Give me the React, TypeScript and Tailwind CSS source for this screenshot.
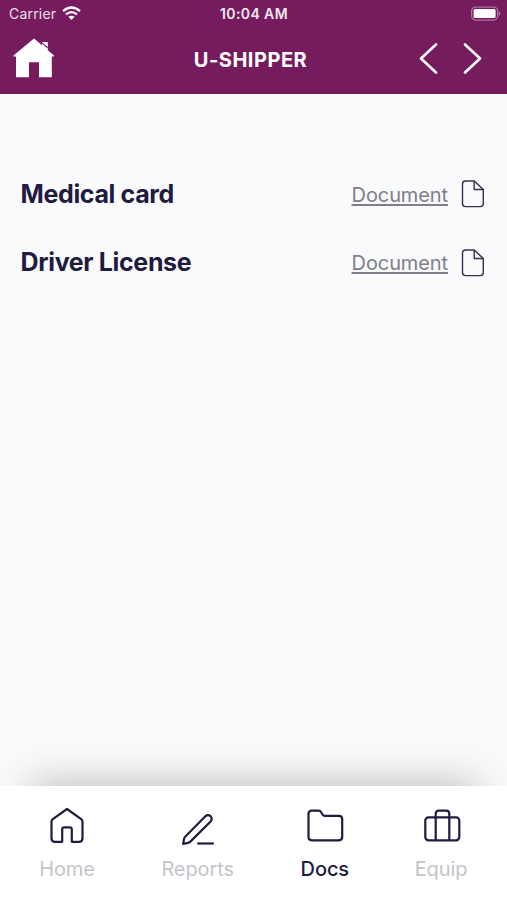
import React, { useState } from 'react';

interface DocumentRow {
  id: string;
  title: string;
}

interface Tab {
  id: string;
  label: string;
  labelClass: string;
  icon: React.ReactNode;
}

const documents: DocumentRow[] = [
  { id: 'medical', title: 'Medical card' },
  { id: 'license', title: 'Driver License' },
];

const tabs: Tab[] = [
  {
    id: 'home',
    label: 'Home',
    labelClass: 'w-[54px]',
    icon: (
      <path d="M20 2 L34.2 12.2 Q35.5 13.2 35.5 14.8 V31.2 Q35.5 34.8 32 34.8 H24.8 V22.5 Q24.8 20.3 22.6 20.3 H17.4 Q15.2 20.3 15.2 22.5 V34.8 H8 Q4.5 34.8 4.5 31.2 V14.8 Q4.5 13.2 5.8 12.2 Z" />
    ),
  },
  {
    id: 'reports',
    label: 'Reports',
    labelClass: 'w-[74px]',
    icon: (
      <>
        <path d="M5.2 36.8 L6 32 Q6.3 30.6 7.4 29.5 L27.4 9.3 A3.65 3.65 0 0 1 32.6 14.5 L12.6 34.4 Q11.4 35.6 10 35.9 Z" />
        <path d="M19.3 36.5 H35.8" />
      </>
    ),
  },
  {
    id: 'docs',
    label: 'Docs',
    labelClass: 'w-[47px]',
    icon: (
      <path d="M6.8 3.7 H13.8 Q15.2 3.7 16 5 L17.6 7.6 Q18.4 8.8 19.8 8.8 H33.9 Q37.2 8.8 37.2 12 V30.1 Q37.2 33.3 33.9 33.3 H6.8 Q3.5 33.3 3.5 30.1 V6.9 Q3.5 3.7 6.8 3.7 Z" />
    ),
  },
  {
    id: 'equip',
    label: 'Equip',
    labelClass: 'w-[52px]',
    icon: (
      <>
        <rect x="4.3" y="10.3" width="34" height="23" rx="3.2" />
        <path d="M14.7 33.3 V6.9 Q14.7 3.7 17.9 3.7 H25.1 Q28.3 3.7 28.3 6.9 V33.3" />
      </>
    ),
  },
];

function StatusBar() {
  return (
    <div className="flex h-7 items-center justify-between pl-[9px] pr-[8px]">
      <div className="flex w-[200px] items-center gap-[6px]">
        <span className="text-[14px] leading-7 tracking-[0.2px] text-white/85">Carrier</span>
        <svg width="19" height="15" viewBox="0 0 19 15" fill="none" stroke="white" strokeWidth="2.3" className="-mt-px">
          <path d="M1 5.1 Q9.5 -2 18 5.1" />
          <path d="M4 8.4 Q9.5 3.9 15 8.4" />
          <path d="M6.4 10.8 Q9.5 8.6 12.6 10.8 L9.5 14 Z" fill="white" stroke="none" />
        </svg>
      </div>
      <span className="whitespace-nowrap text-[14px] font-semibold leading-7 tracking-[0.4px] text-white/90">10:04 AM</span>
      <div className="flex w-[200px] justify-end">
        <svg width="31" height="15" viewBox="0 0 31 15" className="-mr-[2px] -mt-px">
          <rect x="1.6" y="1.1" width="26" height="13" rx="4" fill="none" stroke="white" strokeOpacity="0.4" strokeWidth="1.2" />
          <rect x="3.6" y="3.1" width="22" height="9" rx="1.5" fill="white" />
          <path d="M28.8 5.2 Q31.6 7.5 28.8 9.8 Z" fill="white" fillOpacity="0.5" />
        </svg>
      </div>
    </div>
  );
}

function Header() {
  return (
    <header className="h-[94px] bg-[#761c5e]">
      <StatusBar />
      <div className="flex h-[62px] items-center justify-between pl-[13px] pr-[25px]">
        <button className="-mt-[2px] flex w-[69px]" aria-label="Home">
          <svg width="42" height="40" viewBox="0 0 42 40" fill="white">
            <path d="M21 0.5 L29 7.3 V4 H34.8 V12.2 L41 17.5 V18.5 H38.8 V39.2 H26 V24.2 H16 V39.2 H3 V18.5 H0.5 V17.5 Z" />
            <path d="M28.6 4.6 L34.6 9.8" stroke="#761c5e" strokeWidth="1.2" />
          </svg>
        </button>
        <h1 className="pt-px text-[20px] font-bold leading-6 tracking-[0.5px] text-white">U-SHIPPER</h1>
        <div className="flex w-[63px] justify-between">
          <button aria-label="Previous">
            <svg width="19" height="32" viewBox="0 0 19 32" fill="none" stroke="white" strokeWidth="2.6" strokeLinecap="round" strokeLinejoin="round">
              <path d="M17 1.5 L2 15.5 L17 29.5" />
            </svg>
          </button>
          <button aria-label="Next">
            <svg width="19" height="32" viewBox="0 0 19 32" fill="none" stroke="white" strokeWidth="2.6" strokeLinecap="round" strokeLinejoin="round">
              <path d="M2 1.5 L17 15.5 L2 29.5" />
            </svg>
          </button>
        </div>
      </div>
    </header>
  );
}

function DocumentItem({ title }: { title: string }) {
  return (
    <li className="flex h-[68.5px] items-center justify-between">
      <span className="text-[25px] font-bold tracking-[-0.35px] text-[#211b40]">{title}</span>
      <a href="#" className="flex items-center gap-[13px]">
        <span className="pt-px text-[20px] tracking-[-0.1px] text-[#807e8b] underline decoration-[1.5px] underline-offset-2">
          Document
        </span>
        <svg width="24" height="28" viewBox="0 0 24 28" fill="none" stroke="#35304f" strokeWidth="1.4" strokeLinejoin="round">
          <path d="M4.5 1 H13.2 L22.3 9.5 V23.5 Q22.3 26.6 19.2 26.6 H4.5 Q1.5 26.6 1.5 23.5 V4 Q1.5 1 4.5 1 Z" />
          <path d="M13.2 1 V9.5 H22.3" />
        </svg>
      </a>
    </li>
  );
}

function App() {
  const [activeTab, setActiveTab] = useState('docs');

  return (
    <div className="flex h-screen flex-col overflow-hidden bg-[#f9fafc] font-['Inter',sans-serif]">
      <Header />

      <main className="flex-1 pl-[20.5px] pr-[22px] pt-[66px]">
        <ul>
          {documents.map((doc) => (
            <DocumentItem key={doc.id} title={doc.title} />
          ))}
        </ul>
      </main>

      {/* Soft shadow cast upwards by the tab bar */}
      <div className="mx-[32px] -mb-[60px] h-[60px] shadow-[0_0_42px_2px_rgba(0,0,0,0.26)]" />

      <nav className="relative flex h-[114px] justify-between bg-white px-10 pt-[21px]">
        {tabs.map((tab) => (
          <button
            key={tab.id}
            onClick={() => setActiveTab(tab.id)}
            className={`flex flex-col items-center ${tab.labelClass}`}
          >
            <svg
              width="40"
              height="40"
              viewBox="0 0 40 40"
              fill="none"
              stroke="#211b40"
              strokeWidth="2.2"
              strokeLinejoin="round"
              className="shrink-0"
            >
              {tab.icon}
            </svg>
            <span
              className={`mt-[10px] whitespace-nowrap text-[20px] leading-6 tracking-[-0.1px] ${
                activeTab === tab.id ? 'font-medium text-[#211b40]' : 'text-[#c5c4cb]'
              }`}
            >
              {tab.label}
            </span>
          </button>
        ))}
      </nav>
    </div>
  );
}

export default App;
